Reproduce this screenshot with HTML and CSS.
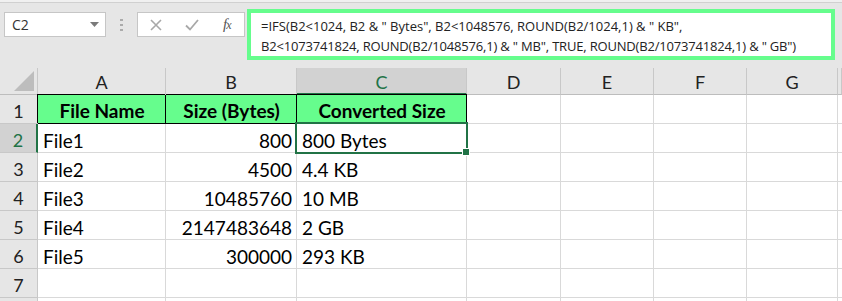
FILE: index.html
```html
<!DOCTYPE html>
<html>
<head>
<meta charset="utf-8">
<link rel="stylesheet" href="styles.css">
</head>
<body>
<div class="app">
  <div class="edge"></div>
  <div class="toolbar">
    <div class="namebox">
      <span class="ref">C2</span>
      <svg class="drop" width="9" height="5" viewBox="0 0 9 5"><polygon points="0,0 9,0 4.5,5" fill="#7a7a7a"/></svg>
    </div>
    <div class="grip">
      <svg width="3" height="12" viewBox="0 0 3 12"><rect x="0" y="0" width="3" height="2" fill="#ababab"/><rect x="0" y="5" width="3" height="2" fill="#ababab"/><rect x="0" y="10" width="3" height="2" fill="#ababab"/></svg>
    </div>
    <div class="fxbox">
      <svg class="ico" width="12" height="12" viewBox="0 0 12 12"><path d="M1 1 L11 11 M11 1 L1 11" stroke="#a8a8a8" stroke-width="1.6" fill="none"/></svg>
      <svg class="ico" width="14" height="12" viewBox="0 0 14 12"><path d="M1 6.5 L5 10.5 L13 1" stroke="#a8a8a8" stroke-width="1.8" fill="none"/></svg>
      <span class="fx">f<span class="x">x</span></span>
    </div>
    <div class="formula">
      <div class="line">=IFS(B2&lt;1024, B2 &amp; " Bytes", B2&lt;1048576, ROUND(B2/1024,1) &amp; " KB",</div>
      <div class="line second">B2&lt;1073741824, ROUND(B2/1048576,1) &amp; " MB", TRUE, ROUND(B2/1073741824,1) &amp; " GB")</div>
    </div>
  </div>
  <div class="sheet">
    <div class="corner"><svg width="20" height="20" viewBox="0 0 20 20"><polygon points="20,0 20,20 0,20" fill="#bdbdbd"/></svg></div>
    <div class="colh">A</div>
    <div class="colh">B</div>
    <div class="colh sel">C</div>
    <div class="colh">D</div>
    <div class="colh">E</div>
    <div class="colh">F</div>
    <div class="colh">G</div>
    <div class="colh"></div>

    <div class="rowh">1</div>
    <div class="cell head first">File Name</div>
    <div class="cell head">Size (Bytes)</div>
    <div class="cell head">Converted Size</div>
    <div class="cell"></div><div class="cell"></div><div class="cell"></div><div class="cell"></div><div class="cell"></div>

    <div class="rowh sel">2</div>
    <div class="cell">File1</div>
    <div class="cell num">800</div>
    <div class="cell active">800 Bytes</div>
    <div class="cell"></div><div class="cell"></div><div class="cell"></div><div class="cell"></div><div class="cell"></div>

    <div class="rowh">3</div>
    <div class="cell">File2</div>
    <div class="cell num">4500</div>
    <div class="cell">4.4 KB</div>
    <div class="cell"></div><div class="cell"></div><div class="cell"></div><div class="cell"></div><div class="cell"></div>

    <div class="rowh">4</div>
    <div class="cell">File3</div>
    <div class="cell num">10485760</div>
    <div class="cell">10 MB</div>
    <div class="cell"></div><div class="cell"></div><div class="cell"></div><div class="cell"></div><div class="cell"></div>

    <div class="rowh">5</div>
    <div class="cell">File4</div>
    <div class="cell num">2147483648</div>
    <div class="cell">2 GB</div>
    <div class="cell"></div><div class="cell"></div><div class="cell"></div><div class="cell"></div><div class="cell"></div>

    <div class="rowh">6</div>
    <div class="cell">File5</div>
    <div class="cell num">300000</div>
    <div class="cell">293 KB</div>
    <div class="cell"></div><div class="cell"></div><div class="cell"></div><div class="cell"></div><div class="cell"></div>

    <div class="rowh">7</div>
    <div class="cell"></div><div class="cell"></div><div class="cell"></div>
    <div class="cell"></div><div class="cell"></div><div class="cell"></div><div class="cell"></div><div class="cell"></div>

    <div class="rowh"></div>
    <div class="cell"></div><div class="cell"></div><div class="cell"></div>
    <div class="cell"></div><div class="cell"></div><div class="cell"></div><div class="cell"></div><div class="cell"></div>
  </div>
</div>
</body>
</html>
```

FILE: styles.css
```css
* { box-sizing: border-box; }
html, body { margin: 0; padding: 0; }
body {
  width: 842px;
  height: 301px;
  overflow: hidden;
  background: #e6e6e6;
  font-family: "Lato", "Open Sans", sans-serif;
}
.app { width: 842px; height: 301px; display: flex; flex-direction: column; }
.edge {
  height: 3px;
  background: #f0f0f0;
  border-bottom: 1px solid #d0d0d0;
  flex: none;
}
.toolbar {
  height: 65px;
  flex: none;
  display: flex;
  align-items: flex-start;
  padding-left: 4px;
}
.namebox {
  margin-top: 9px;
  width: 102px;
  height: 25px;
  background: #fff;
  border: 1px solid #c6c6c6;
  display: flex;
  align-items: center;
  justify-content: space-between;
  padding: 0 6px 0 7px;
}
.ref {
  font-family: "Open Sans", "Noto Sans", sans-serif;
  font-size: 14px;
  color: #333;
}
.drop { margin-top: -1px; }
.grip {
  width: 31px;
  height: 25px;
  margin-top: 9px;
  display: flex;
  align-items: center;
  justify-content: center;
}
.fxbox {
  margin-top: 9px;
  width: 108px;
  height: 25px;
  background: #fff;
  border: 1px solid #c6c6c6;
  display: flex;
  align-items: center;
  padding-left: 12px;
}
.fxbox .ico:first-child { margin-right: 23px; }
.fxbox .ico:nth-child(2) { margin-right: 24px; }
.fx {
  font-family: "Liberation Serif", serif;
  font-style: italic;
  font-size: 15px;
  color: #555;
  letter-spacing: -1px;
}
.fx .x { font-size: 12px; }
.formula {
  margin-top: 6px;
  margin-left: 2px;
  width: 588px;
  height: 51px;
  background: #fff;
  border: 4px solid #66fd8d;
  padding: 4px 0 0 10px;
  font-family: "Open Sans", "Noto Sans", sans-serif;
  font-size: 13px;
  line-height: 19.5px;
  color: #222;
  white-space: nowrap;
}
.formula .second { letter-spacing: -0.18px; }
.sheet {
  flex: 1;
  display: grid;
  grid-template-columns: 38px 128px 131px 170px 94px 93px 93px 91px 4px;
  grid-template-rows: 27px repeat(7, 29px) 10px;
  background: #fff;
}
.corner {
  background: #e6e6e6;
  border-right: 1px solid #c8c8c8;
  border-bottom: 1px solid #bdbdbd;
  display: flex;
  align-items: flex-end;
  justify-content: flex-end;
  padding: 0 3px 3px 0;
}
.colh {
  background: #e6e6e6;
  border-right: 1px solid #c8c8c8;
  border-bottom: 1px solid #bdbdbd;
  display: flex;
  align-items: center;
  justify-content: center;
  font-size: 18px;
  color: #222;
  padding-top: 2px;
}
.colh.sel {
  background: #d2d2d2;
  color: #217346;
  border-bottom: 2px solid #217346;
}
.rowh {
  background: #e6e6e6;
  border-right: 1px solid #c8c8c8;
  border-bottom: 1px solid #c8c8c8;
  display: flex;
  align-items: center;
  justify-content: center;
  font-size: 18px;
  color: #222;
  padding-top: 3px;
}
.rowh.sel {
  background: #d2d2d2;
  color: #217346;
  border-right: 2px solid #217346;
}
.cell {
  border-right: 1px solid #d9d9d9;
  border-bottom: 1px solid #d9d9d9;
  display: flex;
  align-items: center;
  padding: 4px 4px 0 5px;
  font-size: 19px;
  color: #000;
  white-space: nowrap;
}
.cell.num { justify-content: flex-end; }
.cell.head {
  background: #66fd8d;
  font-weight: bold;
  justify-content: center;
  padding-top: 3px;
  border-right: 1px solid #000;
  border-bottom: 1px solid #000;
  box-shadow: 0 -1px 0 #000;
}
.cell.head.first { box-shadow: -1px -1px 0 #000; }
.cell.active { position: relative; }
.cell.active::after {
  content: "";
  position: absolute;
  top: -2px;
  left: -2px;
  right: -2px;
  bottom: -2px;
  border: 2px solid #217346;
}
.cell.active::before {
  content: "";
  position: absolute;
  right: -4px;
  bottom: -4px;
  width: 6px;
  height: 6px;
  background: #217346;
  border: 1px solid #fff;
  z-index: 1;
}
```
